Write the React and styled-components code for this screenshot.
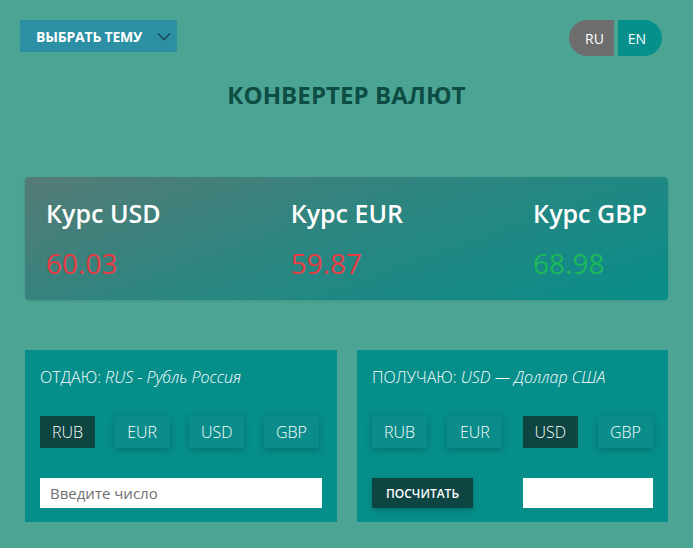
import React, { useState } from "react";
import styled, { createGlobalStyle } from "styled-components";

const GlobalStyle = createGlobalStyle`
  html, body {
    margin: 0;
    padding: 0;
    background: #4ca594;
    font-family: "Open Sans", "Noto Sans", sans-serif;
  }
  * { box-sizing: border-box; }
`;

const Page = styled.div`
  width: 693px;
  height: 548px;
  padding-top: 20px;
  overflow: hidden;
`;

const TopBar = styled.div`
  display: flex;
  justify-content: space-between;
  align-items: flex-start;
  padding: 0 31px 0 20px;
`;

const ThemeButton = styled.button`
  display: flex;
  align-items: center;
  gap: 15px;
  height: 32px;
  width: 157px;
  padding: 0 0 0 16px;
  border: none;
  border-radius: 2px;
  background: #2c8fa4;
  color: #fff;
  font-family: inherit;
  font-weight: 700;
  font-size: 14px;
  letter-spacing: -0.2px;
  cursor: pointer;
`;

const LangGroup = styled.div`
  display: flex;
  gap: 4px;
`;

const LangButton = styled.button`
  width: ${(p) => (p.$side === "left" ? "45px" : "44px")};
  height: 36px;
  border: none;
  border-radius: ${(p) => (p.$side === "left" ? "18px 0 0 18px" : "0 18px 18px 0")};
  background: ${(p) => (p.$active ? "#06908c" : "#6e6e6e")};
  color: #fff;
  font-family: inherit;
  font-size: 14px;
  padding: ${(p) => (p.$side === "left" ? "0 0 0 6px" : "0 6px 0 0")};
`;

const Title = styled.h1`
  margin: 22px 0 0;
  text-align: center;
  font-size: 24px;
  line-height: 33px;
  font-weight: 700;
  color: #0d4d44;
  letter-spacing: 0.1px;
`;

const RatesCard = styled.div`
  margin: 66px 25px 0;
  height: 123px;
  padding: 18px 21px 0;
  display: flex;
  justify-content: space-between;
  border-radius: 4px;
  background: linear-gradient(160deg, #567b76 0%, #2d8580 45%, #088d89 100%);
  box-shadow: 0 1px 3px rgba(0, 0, 0, 0.12);
`;

const Rate = styled.div`
  display: flex;
  flex-direction: column;
`;

const RateLabel = styled.div`
  font-size: 25px;
  font-weight: 600;
  color: #fff;
  line-height: 36px;
`;

const RateValue = styled.div`
  margin-top: 14px;
  font-size: 28px;
  font-weight: 400;
  line-height: 36px;
  color: ${(p) => (p.$up ? "#1db85a" : "#e83c45")};
`;

const Panels = styled.div`
  display: grid;
  grid-template-columns: 312px 311px;
  gap: 20px;
  margin: 50px 25px 0;
`;

const Panel = styled.div`
  background: #068e8b;
  height: 172px;
  padding: 16px 15px 14px;
  display: flex;
  flex-direction: column;
`;

const PanelTitle = styled.div`
  color: #fff;
  font-size: 16px;
  font-weight: 300;
  line-height: 22px;
  white-space: nowrap;

  em {
    font-style: italic;
  }
`;

const CurrencyRow = styled.div`
  display: flex;
  justify-content: space-between;
  margin-top: 28px;
  padding-right: ${(p) => p.$pad || 0}px;
`;

const CurrencyButton = styled.button`
  height: 32px;
  width: 55px;
  border: none;
  background: ${(p) => (p.$active ? "#0c4542" : "#0a8c8a")};
  box-shadow: ${(p) => (p.$active ? "none" : "0 2px 6px rgba(0, 60, 60, 0.35)")};
  color: #fff;
  font-family: inherit;
  font-size: 16px;
  font-weight: 300;
  cursor: pointer;
`;

const BottomRow = styled.div`
  display: flex;
  justify-content: space-between;
  margin-top: 30px;
`;

const NumberInput = styled.input`
  height: 30px;
  width: ${(p) => p.$width};
  border: none;
  background: #fff;
  padding: 0 10px;
  font-family: inherit;
  font-size: 15px;
  color: #333;
  outline: none;

  &::placeholder {
    color: #6f6f6f;
  }
`;

const CalcButton = styled.button`
  height: 30px;
  width: 101px;
  border: none;
  background: #0d4543;
  box-shadow: 0 2px 5px rgba(0, 40, 40, 0.3);
  color: #fff;
  font-family: inherit;
  font-size: 12px;
  font-weight: 600;
`;

const Chevron = () => (
  <svg width="14" height="9" viewBox="0 0 14 9" fill="none">
    <path d="M1 1.5l6 6 6-6" stroke="#1c4f5c" strokeWidth="1.6" />
  </svg>
);

const currencies = ["RUB", "EUR", "USD", "GBP"];

export default function App() {
  const [lang, setLang] = useState("en");
  const [from, setFrom] = useState("RUB");
  const [to, setTo] = useState("USD");

  return (
    <Page>
      <GlobalStyle />
      <TopBar>
        <ThemeButton>
          ВЫБРАТЬ ТЕМУ
          <Chevron />
        </ThemeButton>
        <LangGroup>
          <LangButton $side="left" $active={lang === "ru"} onClick={() => setLang("ru")}>
            RU
          </LangButton>
          <LangButton $side="right" $active={lang === "en"} onClick={() => setLang("en")}>
            EN
          </LangButton>
        </LangGroup>
      </TopBar>
      <Title>КОНВЕРТЕР ВАЛЮТ</Title>

      <RatesCard>
        <Rate>
          <RateLabel>Курс USD</RateLabel>
          <RateValue>60.03</RateValue>
        </Rate>
        <Rate>
          <RateLabel>Курс EUR</RateLabel>
          <RateValue>59.87</RateValue>
        </Rate>
        <Rate>
          <RateLabel>Курс GBP</RateLabel>
          <RateValue $up>68.98</RateValue>
        </Rate>
      </RatesCard>

      <Panels>
        <Panel>
          <PanelTitle>
            ОТДАЮ: <em>RUS - Рубль Россия</em>
          </PanelTitle>
          <CurrencyRow $pad={3}>
            {currencies.map((c) => (
              <CurrencyButton key={c} $active={from === c} onClick={() => setFrom(c)}>
                {c}
              </CurrencyButton>
            ))}
          </CurrencyRow>
          <BottomRow>
            <NumberInput $width="282px" placeholder="Введите число" />
          </BottomRow>
        </Panel>
        <Panel>
          <PanelTitle>
            ПОЛУЧАЮ: <em>USD — Доллар США</em>
          </PanelTitle>
          <CurrencyRow>
            {currencies.map((c) => (
              <CurrencyButton key={c} $active={to === c} onClick={() => setTo(c)}>
                {c}
              </CurrencyButton>
            ))}
          </CurrencyRow>
          <BottomRow>
            <CalcButton>ПОСЧИТАТЬ</CalcButton>
            <NumberInput $width="130px" readOnly />
          </BottomRow>
        </Panel>
      </Panels>
    </Page>
  );
}
